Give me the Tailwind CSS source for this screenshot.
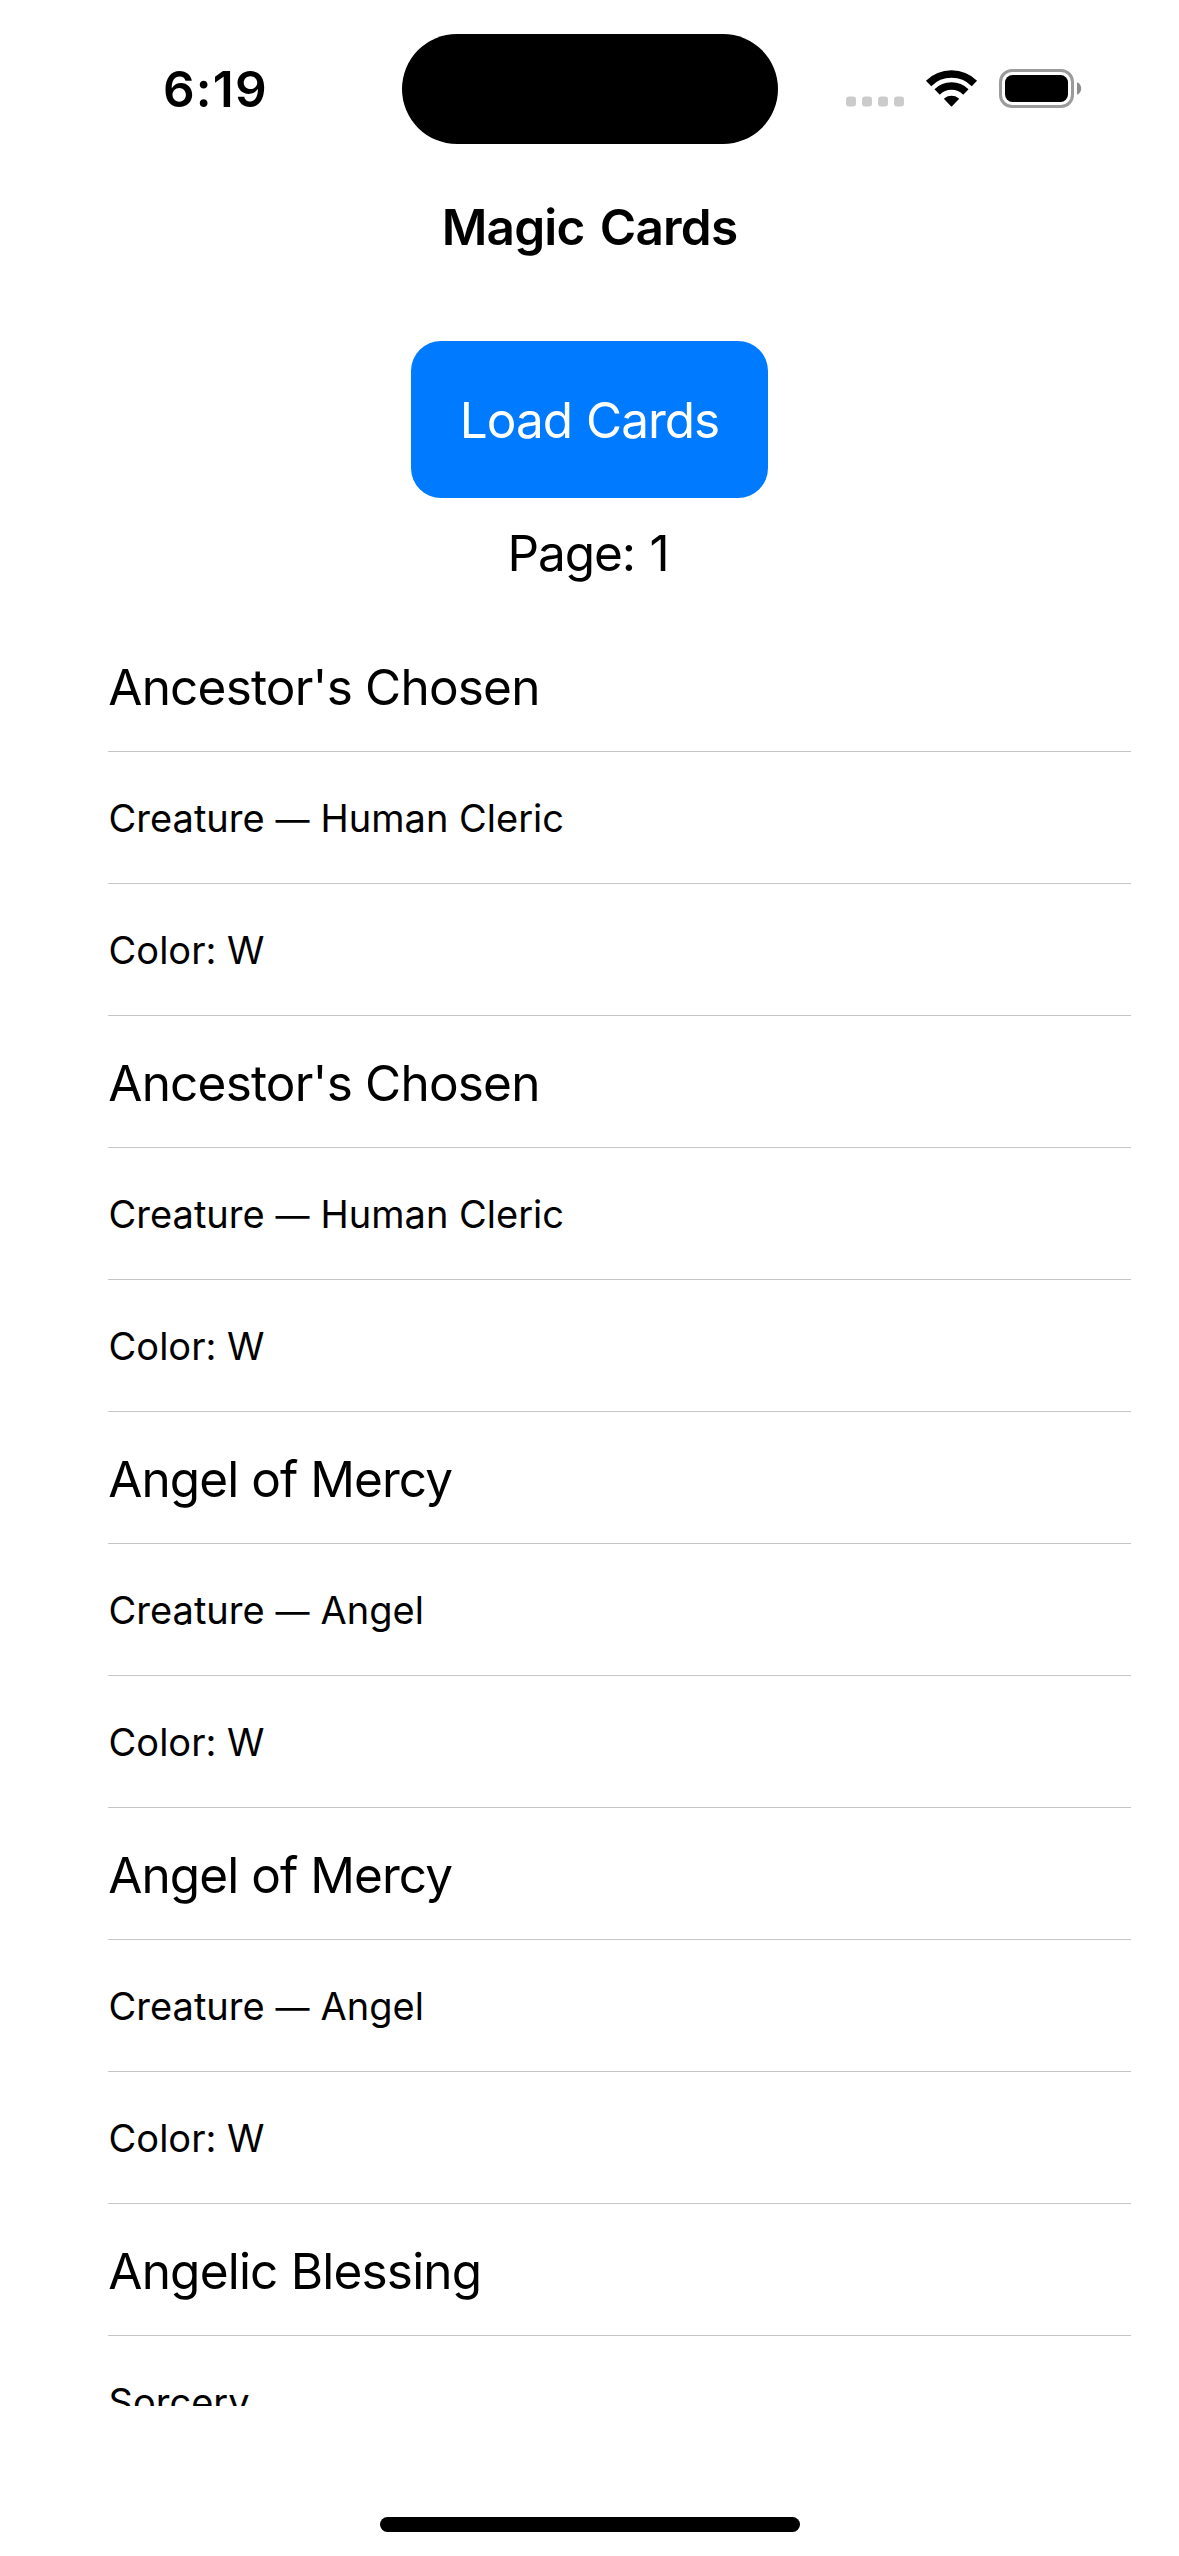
<!DOCTYPE html>
<html lang="en">
<head>
<meta charset="utf-8">
<title>Magic Cards</title>
<script src="https://cdn.jsdelivr.net/npm/@tailwindcss/browser@4"></script>
</head>
<body class="bg-white">
<div class="flex h-[2556px] w-[1179px] flex-col overflow-hidden bg-white font-['Inter',sans-serif] text-black">
  <!-- Status bar -->
  <header class="flex h-[177px] shrink-0 items-center">
    <div class="w-[401.5px] pl-[163px] text-[49.5px] leading-[60px] font-semibold tracking-[1.2px]">6:19</div>
    <div class="mt-px h-[110px] w-[376px] rounded-full bg-black"></div>
    <svg class="ml-[62.5px] h-[60px] w-[250px]" viewBox="840 58 250 60">
      <g fill="#cbcbcb">
        <rect x="846" y="95.5" width="10" height="10" rx="3"/>
        <rect x="862" y="95.5" width="10" height="10" rx="3"/>
        <rect x="878" y="95.5" width="10" height="10" rx="3"/>
        <rect x="894" y="95.5" width="10" height="10" rx="3"/>
      </g>
      <g fill="none" stroke="#000" stroke-width="7.5">
        <path d="M928.6 82.5A32.4 32.4 0 0 1 974.4 82.5"/>
        <path d="M937.1 91A20.4 20.4 0 0 1 965.9 91"/>
      </g>
      <path d="M944.8 97.7A11 11 0 0 1 958.2 97.7L951.5 104.8Z" stroke="#000" stroke-width="1.4" stroke-linejoin="round"/>
      <rect x="1000.5" y="69.5" width="72" height="36" rx="11.5" fill="none" stroke="#9b9b9b" stroke-width="3"/>
      <rect x="1005" y="74" width="63" height="27" rx="7.5"/>
      <path d="M1077 81.3C1079.6 82.3 1081.2 84.6 1081.2 87.5S1079.6 92.7 1077 93.7Z" fill="#8c8c8c"/>
    </svg>
  </header>

  <h1 class="flex h-[99px] shrink-0 items-center justify-center text-[49.5px] leading-[60px] font-semibold tracking-[-0.8px] [word-spacing:3.6px]">Magic Cards</h1>

  <div class="flex h-[344px] shrink-0 flex-col items-center pt-[65px]">
    <button class="h-[157px] w-[357px] rounded-[30px] bg-[#007aff] text-[49.5px] leading-[60px] tracking-[-1px] text-white [word-spacing:1px]">Load Cards</button>
    <p class="pt-[25px] pr-[3px] text-[49.5px] leading-[60px] tracking-[-1.1px] [word-spacing:1.8px]">Page: 1</p>
  </div>

  <ul id="cards" class="h-[1786px] shrink-0 overflow-hidden pr-12 pl-[108px]"></ul>

  <!-- Home indicator -->
  <div class="mt-[111px] ml-[380px] h-[15px] w-[420px] shrink-0 rounded-full bg-black"></div>
</div>

<script>
  const cards = [
    ["Ancestor's Chosen", "Creature — Human Cleric", "W"],
    ["Ancestor's Chosen", "Creature — Human Cleric", "W"],
    ["Angel of Mercy", "Creature — Angel", "W"],
    ["Angel of Mercy", "Creature — Angel", "W"],
    ["Angelic Blessing", "Sorcery"]
  ];
  const row = "flex h-[132px] items-center border-b border-[#c6c6c8] ";
  const title = row + "pt-[3px] pl-[0.3px] text-[49.5px] leading-[60px] ";
  const detail = row + "pt-px pl-[0.6px] text-[38px] leading-[48px] whitespace-pre";
  const dash = '<span class="mx-[0.3px] text-[34px] leading-none">—</span>';
  document.getElementById("cards").innerHTML = cards.map(([name, type, color]) =>
    `<li class="${title}${name === "Angel of Mercy" ? "tracking-[-0.94px]" : "tracking-[-0.8px]"}">${name}</li>` +
    `<li class="${detail}"><span>${type.replace("—", dash)}</span></li>` +
    (color ? `<li class="${detail}">Color: ${color}</li>` : "")
  ).join("");
</script>
</body>
</html>
